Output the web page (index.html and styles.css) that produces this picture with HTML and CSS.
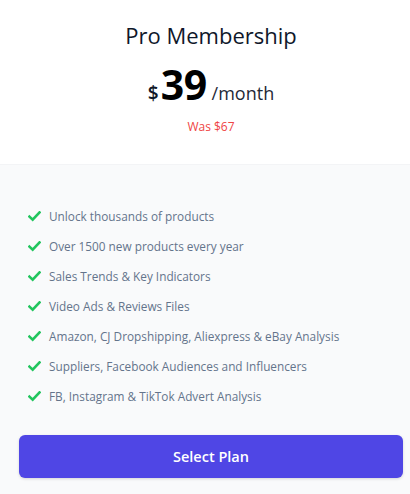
FILE: index.html
```html
<!DOCTYPE html>
<html lang="en">
<head>
<meta charset="utf-8">
<title>Pro Membership</title>
<link rel="stylesheet" href="styles.css">
</head>
<body>
<div class="card">
  <div class="card-top">
    <h3 class="title">Pro Membership</h3>
    <div class="price">
      <span class="currency">$</span>
      <span class="amount">39</span>
      <span class="period">/month</span>
    </div>
    <p class="was">Was $67</p>
  </div>
  <div class="card-bottom">
    <ul class="features">
      <li class="feature"><svg class="check" viewBox="0 0 14 12" width="13" height="11"><path d="M1.5 6.2 5 9.5l7.5-8"/></svg><span>Unlock thousands of products</span></li>
      <li class="feature"><svg class="check" viewBox="0 0 14 12" width="13" height="11"><path d="M1.5 6.2 5 9.5l7.5-8"/></svg><span>Over 1500 new products every year</span></li>
      <li class="feature"><svg class="check" viewBox="0 0 14 12" width="13" height="11"><path d="M1.5 6.2 5 9.5l7.5-8"/></svg><span>Sales Trends &amp; Key Indicators</span></li>
      <li class="feature"><svg class="check" viewBox="0 0 14 12" width="13" height="11"><path d="M1.5 6.2 5 9.5l7.5-8"/></svg><span>Video Ads &amp; Reviews Files</span></li>
      <li class="feature"><svg class="check" viewBox="0 0 14 12" width="13" height="11"><path d="M1.5 6.2 5 9.5l7.5-8"/></svg><span>Amazon, CJ Dropshipping, Aliexpress &amp; eBay Analysis</span></li>
      <li class="feature"><svg class="check" viewBox="0 0 14 12" width="13" height="11"><path d="M1.5 6.2 5 9.5l7.5-8"/></svg><span>Suppliers, Facebook Audiences and Influencers</span></li>
      <li class="feature"><svg class="check" viewBox="0 0 14 12" width="13" height="11"><path d="M1.5 6.2 5 9.5l7.5-8"/></svg><span>FB, Instagram &amp; TikTok Advert Analysis</span></li>
    </ul>
    <button class="select-btn" type="button">Select Plan</button>
  </div>
</div>
</body>
</html>
```
FILE: styles.css
```css
* { box-sizing: border-box; }
html, body { margin: 0; padding: 0; }
body {
  font-family: "Open Sans", "Noto Sans", sans-serif;
  background: #f9fafb;
  width: 410px;
  height: 494px;
  overflow: hidden;
}
.card {
  display: flex;
  flex-direction: column;
  height: 494px;
}
.card-top {
  background: #ffffff;
  border-bottom: 1px solid #f3f4f6;
  padding: 19px 7px 0 19px;
  height: 165px;
  display: flex;
  flex-direction: column;
  align-items: center;
}
.title {
  margin: 0;
  font-size: 22px;
  line-height: 32px;
  font-weight: 500;
  color: #0f172a;
}
.price {
  margin-top: 9px;
  display: flex;
  align-items: baseline;
  height: 48px;
  line-height: 48px;
}
.currency {
  font-size: 19px;
  font-weight: 600;
  color: #111827;
  margin-right: 2px;
}
.amount {
  font-size: 41px;
  font-weight: 700;
  color: #000000;
  letter-spacing: -0.5px;
}
.period {
  font-size: 18px;
  color: #1f2937;
  margin-left: 5px;
}
.was {
  margin: 11px 0 0;
  font-size: 12px;
  line-height: 16px;
  color: #ef4444;
}
.card-bottom {
  flex: 1;
  background: #f9fafb;
  padding: 41px 7px 0 19px;
}
.features {
  list-style: none;
  margin: 0;
  padding: 0 0 0 9px;
  display: flex;
  flex-direction: column;
  gap: 10px;
}
.feature {
  display: flex;
  align-items: center;
  gap: 8px;
  height: 20px;
  font-size: 11.8px;
  font-weight: 500;
  color: #64748b;
}
.check {
  fill: none;
  stroke: #22c55e;
  stroke-width: 2.8;
  stroke-linecap: square;
  stroke-linejoin: miter;
  flex: none;
}
.select-btn {
  margin-top: 29px;
  width: 384px;
  height: 43px;
  border: none;
  border-radius: 6px;
  background: #4f46e5;
  color: #ffffff;
  font-family: inherit;
  font-size: 14.5px;
  font-weight: 600;
  box-shadow: 0 1px 3px rgba(0,0,0,0.15);
}
```
